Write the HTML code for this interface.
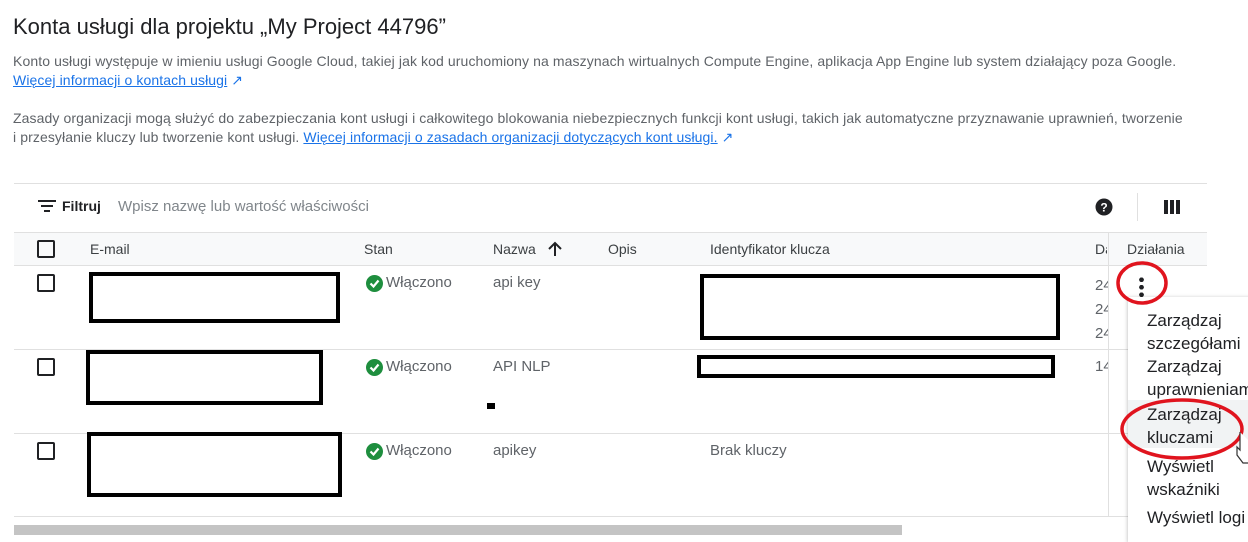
<!DOCTYPE html>
<html><head><meta charset="utf-8"><style>
*{margin:0;padding:0;box-sizing:border-box}
body{width:1248px;height:535px;overflow:hidden;background:#fff;font-family:"Liberation Sans",sans-serif;color:#202124;position:relative}
.a{position:absolute;white-space:nowrap}
.p{font-size:14px;color:#5f6368;letter-spacing:0.1px}
.l{color:#1a73e8;text-decoration:underline;text-decoration-color:#1a73e8}
.t{font-size:15px;color:#5f6368}
.h{font-size:14px;color:#3c4043}
.cb{position:absolute;width:18px;height:18px;border:2px solid #202124;border-radius:2px}
.box{position:absolute;border:4px solid #000}
.hr{position:absolute;height:1px;background:#e0e0e0}
.m{font-size:17px;color:#202124;left:1147px}
</style></head><body>
<div class="a" style="left:13px;top:14px;font-size:22px;color:#202124">Konta usługi dla projektu „My Project 44796”</div>
<div class="a p" style="left:13px;top:53px">Konto usługi występuje w imieniu usługi Google Cloud, takiej jak kod uruchomiony na maszynach wirtualnych Compute Engine, aplikacja App Engine lub system działający poza Google.</div>
<div class="a p" style="left:13px;top:72px"><span class="l">Więcej informacji o kontach usługi</span> <span style="color:#1a73e8">↗</span></div>
<div class="a p" style="left:13px;top:110px">Zasady organizacji mogą służyć do zabezpieczania kont usługi i całkowitego blokowania niebezpiecznych funkcji kont usługi, takich jak automatyczne przyznawanie uprawnień, tworzenie</div>
<div class="a p" style="left:13px;top:129px">i przesyłanie kluczy lub tworzenie kont usługi. <span class="l">Więcej informacji o zasadach organizacji dotyczących kont usługi.</span> <span style="color:#1a73e8">↗</span></div>

<div class="hr" style="left:14px;top:183px;width:1193px"></div>
<svg class="a" style="left:38px;top:199px" width="18" height="14"><path d="M0 2h18M3 7h12M6 12h6" stroke="#202124" stroke-width="2"/></svg>
<div class="a" style="left:62px;top:198px;font-size:14px;font-weight:bold;color:#202124">Filtruj</div>
<div class="a" style="left:118px;top:198px;font-size:15px;color:#80868b">Wpisz nazwę lub wartość właściwości</div>
<svg class="a" style="left:1095px;top:198px" width="18" height="18"><circle cx="9" cy="9" r="8.5" fill="#202124"/><text x="9" y="13.5" font-size="12" font-weight="bold" fill="#fff" text-anchor="middle" font-family="Liberation Sans">?</text></svg>
<div class="a" style="left:1137px;top:193px;width:1px;height:28px;background:#e0e0e0"></div>
<div class="a" style="left:1164px;top:200px;width:16px;height:14px;background:repeating-linear-gradient(90deg,#202124 0 4px,transparent 4px 6px)"></div>

<div class="a" style="left:14px;top:232px;width:1193px;height:34px;background:#f8f9fa;border-top:1px solid #e0e0e0;border-bottom:1px solid #e0e0e0"></div>
<div class="cb" style="left:37px;top:240px"></div>
<div class="a h" style="left:90px;top:241px">E-mail</div>
<div class="a h" style="left:364px;top:241px">Stan</div>
<div class="a h" style="left:493px;top:241px">Nazwa</div>
<svg class="a" style="left:548px;top:241px" width="14" height="16"><path d="M7 15V2M1 8l6-6 6 6" stroke="#202124" stroke-width="2" fill="none"/></svg>
<div class="a h" style="left:608px;top:241px">Opis</div>
<div class="a h" style="left:710px;top:241px">Identyfikator klucza</div>
<div class="a h" style="left:1095px;top:241px;width:12px;overflow:hidden">Data</div>
<div class="a h" style="left:1127px;top:241px">Działania</div>
<div class="a" style="left:1108px;top:232px;width:1px;height:285px;background:#e0e0e0"></div>

<div class="hr" style="left:14px;top:349px;width:1193px"></div>
<div class="hr" style="left:14px;top:433px;width:1193px"></div>
<div class="hr" style="left:14px;top:516px;width:1193px"></div>

<div class="cb" style="left:37px;top:274px"></div>
<div class="cb" style="left:37px;top:358px"></div>
<div class="cb" style="left:37px;top:442px"></div>

<div class="box" style="left:89px;top:272px;width:251px;height:51px"></div>
<div class="box" style="left:86px;top:350px;width:237px;height:55px"></div>
<div class="box" style="left:87px;top:432px;width:255px;height:65px"></div>
<div class="box" style="left:700px;top:274px;width:360px;height:66px"></div>
<div class="box" style="left:697px;top:355px;width:358px;height:23px"></div>
<div class="a" style="left:487px;top:403px;width:8px;height:6px;background:#000"></div>

<svg class="a" style="left:366px;top:275px" width="17" height="17"><circle cx="8.5" cy="8.5" r="8.5" fill="#1e8e3e"/><path d="M4.5 8.5l3 3 5-6" stroke="#fff" stroke-width="2.2" fill="none"/></svg>
<svg class="a" style="left:366px;top:359px" width="17" height="17"><circle cx="8.5" cy="8.5" r="8.5" fill="#1e8e3e"/><path d="M4.5 8.5l3 3 5-6" stroke="#fff" stroke-width="2.2" fill="none"/></svg>
<svg class="a" style="left:366px;top:443px" width="17" height="17"><circle cx="8.5" cy="8.5" r="8.5" fill="#1e8e3e"/><path d="M4.5 8.5l3 3 5-6" stroke="#fff" stroke-width="2.2" fill="none"/></svg>
<div class="a t" style="left:386px;top:274px">Włączono</div>
<div class="a t" style="left:386px;top:358px">Włączono</div>
<div class="a t" style="left:386px;top:442px">Włączono</div>
<div class="a t" style="left:493px;top:274px">api key</div>
<div class="a t" style="left:493px;top:358px">API NLP</div>
<div class="a t" style="left:493px;top:442px">apikey</div>
<div class="a t" style="left:710px;top:442px">Brak kluczy</div>
<div class="a t" style="left:1095px;top:274px;width:13px;overflow:hidden;line-height:24px">24<br>24<br>24</div>
<div class="a t" style="left:1095px;top:358px;width:13px;overflow:hidden">14</div>

<div class="a" style="left:1139px;top:276px;width:5px;height:22px;background:radial-gradient(circle,#202124 2.2px,transparent 2.5px) 0 0/5px 7.5px"></div>

<div class="a" style="left:1128px;top:297px;width:130px;height:245px;background:#fff;box-shadow:0 1px 4px rgba(0,0,0,.3)"></div>
<div class="a" style="left:1128px;top:400px;width:130px;height:48px;background:#f1f3f4"></div>
<div class="a m" style="top:309px;line-height:23px">Zarządzaj<br>szczegółami</div>
<div class="a m" style="top:355px;line-height:23px">Zarządzaj<br>uprawnieniami</div>
<div class="a m" style="top:403px;line-height:23px">Zarządzaj<br>kluczami</div>
<div class="a m" style="top:455px;line-height:23px">Wyświetl<br>wskaźniki</div>
<div class="a m" style="top:508px">Wyświetl logi</div>

<svg class="a" style="left:1115px;top:258px" width="60" height="50"><ellipse cx="27" cy="25" rx="24" ry="20" fill="none" stroke="#e0141e" stroke-width="3.5"/></svg>
<svg class="a" style="left:1118px;top:395px" width="130" height="68"><ellipse cx="64" cy="34" rx="60" ry="29" fill="none" stroke="#e0141e" stroke-width="3.5"/></svg>
<svg class="a" style="left:1236px;top:430px" width="14" height="36"><path d="M4 2v18l-3-3v8l6 8h7V12" stroke="#333" stroke-width="1.2" fill="#fff"/></svg>

<div class="a" style="left:14px;top:525px;width:888px;height:10px;background:#c4c4c4"></div>
</body></html>
